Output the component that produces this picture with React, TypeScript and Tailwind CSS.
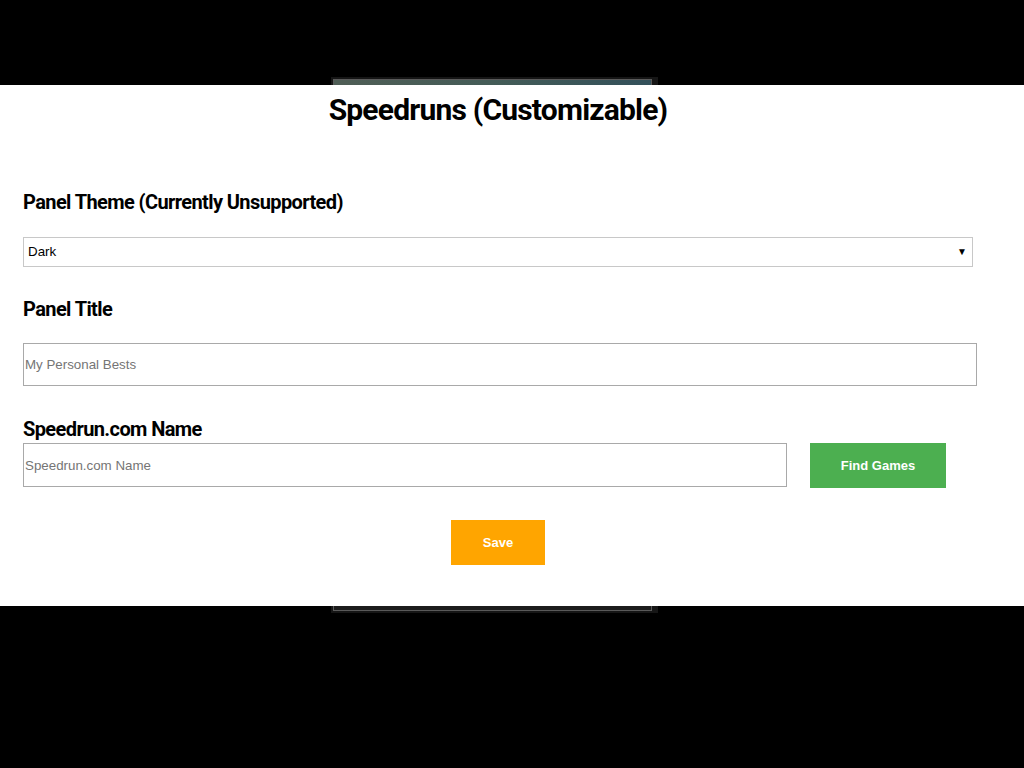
export default function App() {
  return (
    <div className="relative h-[768px] w-full bg-black">
      {/* panel behind the config overlay */}
      <div className="ml-[331px] pt-[77px]">
        <div className="h-[536px] w-[327px] bg-[#161616] p-[2px] pr-[6px]">
          <div className="h-full w-full border border-[#5a5a5a] bg-[#1c1c1c]">
            <div className="h-[40px] w-full bg-gradient-to-r from-[#4f5e56] via-[#445c57] to-[#33505a]" />
          </div>
        </div>
      </div>

      {/* config overlay */}
      <div
        className="absolute left-0 right-0 top-[85px] h-[521px] bg-white"
        style={{ fontFamily: "Roboto, sans-serif" }}
      >
        <div className="w-[954px] pl-[23px]">
          <h1 className="w-[950px] pt-[5px] text-center text-[30px] font-bold leading-[40px] tracking-[-0.8px] text-black">
            Speedruns (Customizable)
          </h1>

          <h2 className="mt-[58px] text-[20px] font-bold leading-[28px] tracking-[-0.6px] text-black">
            Panel Theme (Currently Unsupported)
          </h2>
          <div className="relative mt-[21px] w-[950px]">
            <select
              className="h-[30px] w-full appearance-none border border-[#c8c8c8] bg-white pl-[4px] text-[13.33px] text-black outline-none"
              style={{ fontFamily: "'Liberation Sans', Arial, sans-serif" }}
              defaultValue="dark"
            >
              <option value="dark">Dark</option>
              <option value="light">Light</option>
            </select>
            <span className="pointer-events-none absolute right-[6px] top-[7px] text-[10px] text-black">
              ▼
            </span>
          </div>

          <h2 className="mt-[28px] text-[20px] font-bold leading-[28px] tracking-[-0.6px] text-black">
            Panel Title
          </h2>
          <input
            type="text"
            placeholder="My Personal Bests"
            className="mt-[20px] block h-[43px] w-[954px] border border-[#a9a9a9] pl-[1px] text-[13.33px] text-black placeholder:text-[#757575] outline-none"
            style={{ fontFamily: "'Liberation Sans', Arial, sans-serif" }}
          />

          <h2 className="mt-[29px] text-[20px] font-bold leading-[28px] tracking-[-0.6px] text-black">
            Speedrun.com Name
          </h2>
          <div className="flex items-start gap-[23px]">
            <input
              type="text"
              placeholder="Speedrun.com Name"
              className="block h-[44px] w-[764px] border border-[#a9a9a9] pl-[1px] text-[13.33px] text-black placeholder:text-[#757575] outline-none"
              style={{ fontFamily: "'Liberation Sans', Arial, sans-serif" }}
            />
            <button
              className="h-[45px] w-[136px] bg-[#4caf50] text-[13px] font-bold text-white"
              style={{ fontFamily: "'Liberation Sans', Arial, sans-serif" }}
            >
              Find Games
            </button>
          </div>

          <div className="mt-[32px] flex w-[950px] justify-center">
            <button
              className="h-[45px] w-[94px] bg-[#ffa500] text-[13px] font-bold text-white"
              style={{ fontFamily: "'Liberation Sans', Arial, sans-serif" }}
            >
              Save
            </button>
          </div>
        </div>
      </div>
    </div>
  );
}
